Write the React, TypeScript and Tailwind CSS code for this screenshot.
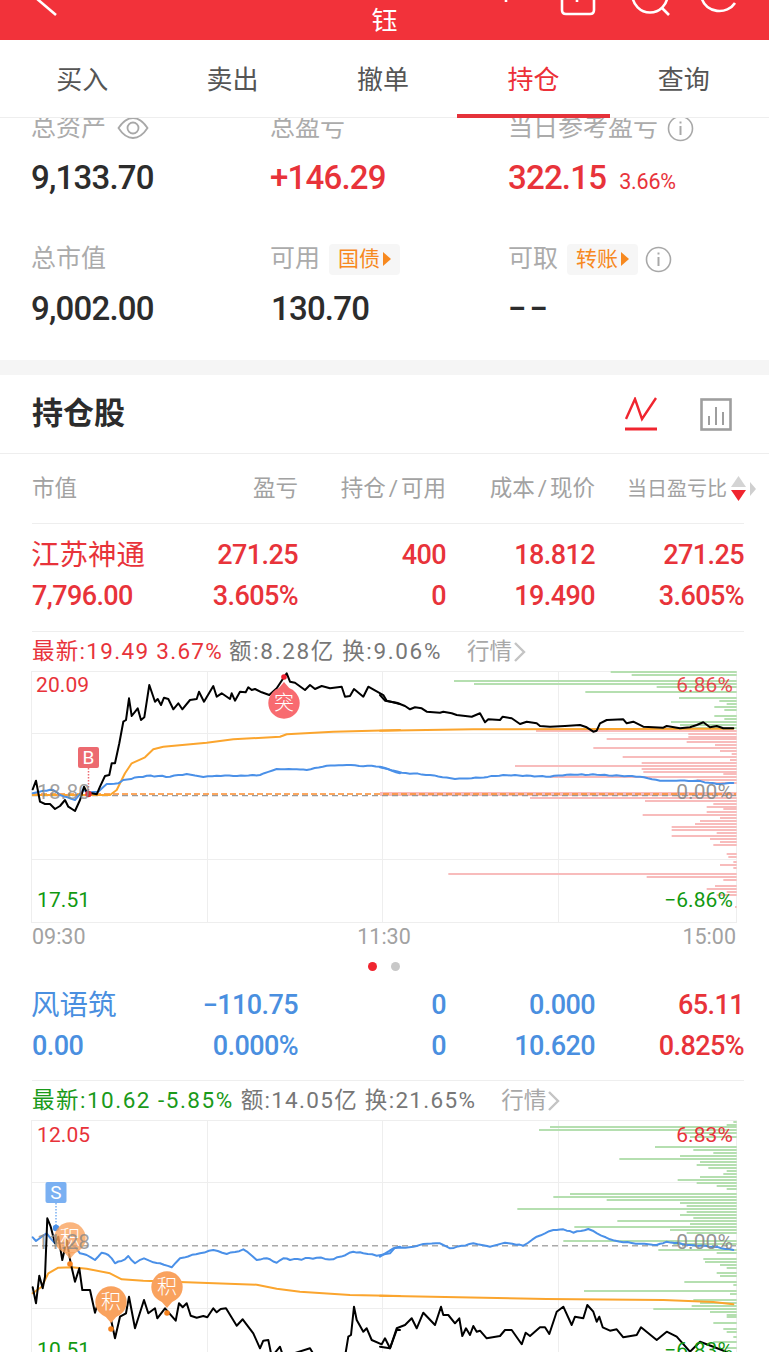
import React from "react";

const FONT = "font-['Roboto','Noto_Sans_CJK_SC',sans-serif]";
type P = [number, number];

const zz = (pts: P[], ox: number, oy: number) =>
  pts.map(([x, y]) => `${(ox + x / 3).toFixed(1)},${(oy + y / 3).toFixed(1)}`).join(" ");

const wobble = (pts: P[], amp: number): P[] => {
  const out: P[] = [];
  for (let i = 0; i < pts.length - 1; i++) {
    const [x0, y0] = pts[i];
    const [x1, y1] = pts[i + 1];
    const n = Math.max(1, Math.round((x1 - x0) / 12));
    for (let k = 0; k < n; k++) {
      const x = x0 + ((x1 - x0) * k) / n;
      const y = y0 + ((y1 - y0) * k) / n;
      const noise = k === 0 ? 0 : amp * (Math.sin(x * 0.37) + Math.sin(x * 0.91 + 1.3)) * 0.6;
      out.push([x, y + noise]);
    }
  }
  out.push(pts[pts.length - 1]);
  return out;
};

const c1Black1: P[] = [[98,478],[108,452],[120,515],[135,522],[150,522],[165,537],[180,528],[195,510],[205,530],[225,543],[240,510],[252,470],[262,490],[275,490],[290,493],[300,470],[315,438],[328,435],[335,400],[345,400],[358,340],[370,275],[378,270],[387,205],[395,258],[413,235],[423,270],[433,262],[448,165],[465,215],[473,207],[483,225],[492,203],[505,207],[520,238],[535,220],[547,238],[570,210],[590,207],[597,185],[612,215],[640,168],[650,200],[665,190],[690,207],[695,190],[705,212],[720,185],[737,187],[745,172],[755,180],[765,177],[785,187],[808,195],[830,175],[850,145],[860,130],[870,155],[885,158],[915,180],[930,165],[945,177],[965,168],[990,175],[1025,170],[1035,200],[1050,198],[1062,177],[1090,200],[1105,170],[1150,195],[1160,212],[1200,222]];
const c1Black2: P[] = [[0,195],[15,212],[50,218],[75,228],[90,238],[105,232],[125,235],[140,245],[180,248],[190,245],[215,250],[230,255],[275,260],[300,250],[315,277],[325,268],[360,270],[368,260],[395,265],[420,282],[440,275],[470,280],[480,288],[510,290],[555,288],[600,285],[620,292],[640,305],[650,302],[660,280],[680,270],[730,268],[740,280],[760,275],[790,290],[850,293],[860,288],[900,295],[930,292],[950,285],[970,277],[990,292],[1010,288],[1030,295],[1060,295]];
const c1Orange1: P[] = [[98,495],[330,495],[350,480],[375,430],[395,400],[435,382],[460,358],[490,350],[620,338],[700,328],[840,320],[860,313],[1000,305],[1200,300]];
const c1Orange2: P[] = [[0,302],[280,298],[1060,296]];
const c1Blue1: P[] = [[98,490],[130,482],[160,480],[180,495],[225,510],[250,480],[270,487],[295,485],[320,462],[355,460],[370,450],[440,437],[510,440],[560,432],[610,441],[650,437],[700,438],[780,435],[830,417],[890,418],[920,420],[980,407],[1040,405],[1140,410],[1200,430]];
const c1Blue2: P[] = [[0,412],[65,428],[150,435],[225,447],[300,443],[370,435],[510,440],[560,434],[650,434],[780,440],[840,452],[950,452],[1010,462],[1060,459]];
const c1Green: P[] = [[125,692],[134,755],[152,222],[161,282],[170,830],[187,616],[205,897],[214,1018],[222,1040],[231,1003],[240,1033],[258,1003],[267,1033],[275,873],[285,900],[293,940]];
const c1Red: P[] = [[302,468],[311,925],[320,925],[328,680],[337,920],[346,1005],[354,640],[363,1020],[372,1055],[380,728],[389,1050],[398,785],[407,405],[416,785],[425,790],[433,1030],[442,510],[451,950],[460,1000],[488,0],[495,0],[503,450],[512,795],[521,1000],[530,980],[538,1030],[547,980],[556,788],[565,1020],[574,960],[583,945],[592,875],[601,875],[610,1010],[618,875],[627,990],[636,1020],[645,1000],[672,1040],[680,1045],[695,1060],[705,1020],[714,1060],[732,205],[741,800],[750,1030],[768,1005],[777,980],[786,1040],[795,1010],[830,1065]];

const c2Black1: P[] = [[98,622],[108,670],[118,587],[128,625],[135,590],[142,415],[152,440],[165,490],[175,470],[187,540],[200,480],[212,550],[225,605],[238,565],[247,630],[270,630],[285,698],[295,665],[325,680],[345,775],[360,710],[378,700],[387,650],[405,745],[432,660],[445,700],[465,685],[472,715],[495,685],[527,722],[537,670],[548,682],[560,670],[572,707],[590,713],[610,708],[622,712],[640,685],[650,697],[662,687],[678,685],[710,737],[728,718],[760,760],[780,805],[790,782],[805,780],[815,830],[840,800],[850,830],[930,805],[945,830],[1035,830],[1045,770],[1053,765],[1062,680],[1070,720],[1090,755],[1100,745],[1115,780],[1145,793],[1155,775],[1170,805],[1190,750],[1200,750]];
const c2Black2: P[] = [[0,800],[30,805],[50,745],[75,735],[95,715],[110,745],[130,698],[165,735],[183,680],[190,705],[205,705],[225,730],[238,715],[247,768],[258,745],[270,765],[280,738],[290,755],[300,752],[320,775],[360,768],[375,750],[395,750],[425,793],[437,758],[450,768],[480,742],[495,742],[508,762],[530,695],[550,680],[575,735],[585,710],[610,715],[622,675],[640,695],[650,725],[658,710],[668,742],[690,752],[710,748],[730,772],[770,765],[783,742],[830,780],[860,755],[890,770],[930,815],[960,785],[1000,800],[1040,816]];
const c2Blue1: P[] = [[98,472],[108,483],[125,470],[140,460],[165,490],[205,487],[225,500],[240,520],[260,525],[285,540],[305,518],[325,525],[345,550],[375,538],[385,528],[405,550],[432,535],[460,547],[480,550],[515,562],[540,535],[600,520],[640,510],[680,522],[730,508],[770,540],[800,535],[830,548],[850,535],[870,540],[950,533],[1000,538],[1060,515],[1090,520],[1130,527],[1170,520],[1185,503],[1200,500]];
const c2Blue2: P[] = [[0,530],[40,505],[100,500],[130,492],[180,490],[210,505],[280,490],[330,500],[375,488],[430,497],[470,470],[520,450],[550,448],[580,458],[625,447],[690,478],[730,487],[830,495],[860,485],[930,495],[1000,500],[1060,510]];
const c2Orange1: P[] = [[98,640],[125,620],[145,580],[175,563],[215,562],[260,566],[330,580],[365,598],[430,602],[560,607],[770,614],[830,626],[900,635],[1050,645],[1200,648]];
const c2Orange2: P[] = [[0,647],[500,657],[850,660],[1000,666],[1060,673]];
const c2Green: P[] = [[125,1060],[134,1040],[142,510],[150,477],[160,910],[170,930],[202,825],[211,940],[220,1000],[229,900],[238,718],[247,960],[256,950],[265,985],[274,1040],[283,1030],[292,960],[301,893],[310,950],[319,1010],[328,1040],[342,570],[351,520],[360,680],[369,900],[378,920],[387,412],[396,920],[405,900],[414,940],[423,712],[432,930],[441,583],[450,870],[459,920],[483,550],[492,880],[510,835],[519,1010],[537,970],[546,975],[555,1020],[564,1040],[578,1010],[587,1020],[605,913],[614,1060],[632,612],[641,1050],[659,940],[668,960],[677,935],[686,820],[695,990],[704,1040],[712,1040],[730,1000],[748,1030],[757,1040],[770,1060],[785,1000],[803,1040]];

const Line = ({ pts, ox, oy, color, w = 2 }: { pts: P[]; ox: number; oy: number; color: string; w?: number }) => (
  <polyline points={zz(pts, ox, oy)} fill="none" stroke={color} strokeWidth={w} strokeLinejoin="round" strokeLinecap="round" />
);

const Bars = ({ pts, oy, color }: { pts: P[]; oy: number; color: string }) => (
  <g stroke={color} strokeWidth={2}>
    {pts.map(([y, x], i) => {
      const px = 380 + x / 3;
      const py = Math.round(oy + y / 3);
      return <line key={i} x1={px} x2={736.7} y1={py} y2={py} />;
    })}
  </g>
);

const Grid = ({ top }: { top: number }) => (
  <g stroke="#eeeeee" strokeWidth={1} fill="none">
    <rect x={31.5} y={top + 0.5} width={705} height={251} />
    <line x1={32} x2={736} y1={top + 62.5} y2={top + 62.5} />
    <line x1={32} x2={736} y1={top + 188.5} y2={top + 188.5} />
    <line x1={207.5} x2={207.5} y1={top} y2={top + 251} />
    <line x1={382.5} x2={382.5} y1={top} y2={top + 251} />
    <line x1={558.5} x2={558.5} y1={top} y2={top + 251} />
  </g>
);

const Bubble = ({ cx, cy, dotY, color, dot, label }: { cx: number; cy: number; dotY: number; color: string; dot: string; label: string }) => (
  <g>
    <circle cx={cx} cy={cy} r={15.7} fill={color} />
    <polygon points={dotY > cy ? `${cx - 6},${cy + 14} ${cx + 6},${cy + 14} ${cx},${cy + 21}` : `${cx - 6},${cy - 14} ${cx + 6},${cy - 14} ${cx},${cy - 21}`} fill={color} />
    <circle cx={cx} cy={dotY} r={2.8} fill={dot} />
    <text x={cx} y={cy + 7} textAnchor="middle" fontSize={20} fontWeight={300} fill="#fff" fontFamily="'Noto Sans CJK SC',sans-serif">{label}</text>
  </g>
);

const Flag = ({ x, y, color, dot, label, dotY }: { x: number; y: number; color: string; dot: string; label: string; dotY: number }) => (
  <g>
    <line x1={x + 10.5} x2={x + 10.5} y1={y + 21} y2={dotY} stroke={color} strokeWidth={1.5} strokeDasharray="1.5 1.5" />
    <rect x={x} y={y} width={21} height={21} rx={2} fill={color} />
    <circle cx={x + 10.5} cy={dotY} r={3.2} fill={dot} />
    <text x={x + 10.5} y={y + 17} textAnchor="middle" fontSize={19} fill="#fff" fontFamily="Roboto,sans-serif">{label}</text>
  </g>
);

const Tag = ({ label }: { label: string }) => (
  <span className="ml-[9px] flex h-[31px] w-[71px] items-center justify-center gap-[3px] rounded-[4px] bg-[#f6f6f6] text-[21px] text-[#f7891f]">
    {label}
    <svg width="8" height="14" viewBox="0 0 8 14"><polygon points="0,0 8,7 0,14" fill="#f7891f" /></svg>
  </span>
);

const Info = ({ className = "" }: { className?: string }) => (
  <svg width="27" height="27" viewBox="0 0 27 27" className={className} fill="none" stroke="#a8a8a8">
    <circle cx="13.5" cy="13.5" r="12" strokeWidth="1.6" />
    <line x1="13.5" y1="11" x2="13.5" y2="20" strokeWidth="2" />
    <line x1="13.5" y1="6.5" x2="13.5" y2="8.5" strokeWidth="2" />
  </svg>
);

const Eye = () => (
  <svg width="32" height="22" viewBox="0 0 32 22" fill="none" stroke="#a8a8a8" className="ml-[11px]">
    <path d="M1.5 11 C7 2.5 12 1 16 1 C20 1 25 2.5 30.5 11 C25 19.5 20 21 16 21 C12 21 7 19.5 1.5 11 Z" strokeWidth="1.8" />
    <circle cx="16" cy="11" r="5.5" strokeWidth="1.8" />
  </svg>
);

const Stat = ({ label, extra, value, valueClass, sub }: { label: string; extra?: React.ReactNode; value: string; valueClass: string; sub?: string }) => (
  <div>
    <div className="flex h-[32px] items-center text-[25px] leading-[32px] text-[#ababab]">
      {label}
      {extra}
    </div>
    <div className={`mt-[14px] flex h-[40px] items-baseline text-[33px] font-medium leading-[40px] tracking-[-0.8px] ${valueClass}`}>
      {value}
      {sub && <span className="ml-[13px] text-[21.5px] font-normal tracking-[-0.2px]">{sub}</span>}
    </div>
  </div>
);

const Row = ({ color, name, v1, v2, c1, c2, c3, c4, c5, c6, c7, c8, c9 }: { color: string; name: string; v1: string; v2: string; c1: string; c2: string; c3: string; c4: string; c5: string; c6: string; c7?: string; c8?: string; c9: string }) => (
  <div className={`grid grid-cols-[266px_148px_149px_149px] gap-y-[12px] text-[27px] font-medium leading-[29px] tracking-[-0.6px] ${color}`}>
    <span className="flex h-[29px] items-center justify-between">
      <span className="-ml-px text-[28.5px] font-normal tracking-normal">{name}</span>
      <span>{c1}</span>
    </span>
    <span className="text-right">{c2}</span>
    <span className="text-right">{c3}</span>
    <span className={`text-right ${c7 ?? ""}`}>{c4}</span>
    <span className="flex h-[29px] items-center justify-between">
      <span>{v1}</span>
      <span>{v2}</span>
    </span>
    <span className="text-right">{c5}</span>
    <span className="text-right">{c6}</span>
    <span className={`text-right ${c8 ?? ""}`}>{c9}</span>
  </div>
);

const Quote = ({ lead, rest, leadClass, restClass }: { lead: string; rest: string; leadClass: string; restClass: string }) => (
  <div className="flex h-[39px] items-center text-[22.5px] text-[#777777]">
    <span className={leadClass}>{lead}</span>
    <span className={restClass}>{rest}</span>
    <span className="ml-[25px] flex items-center text-[#a8a8a8]">
      行情
      <svg width="13" height="22" viewBox="0 0 13 22" fill="none" stroke="#c4c4c4" strokeWidth="2.4" className="ml-[1px]"><polyline points="2,2 11,11 2,20" /></svg>
    </span>
  </div>
);

const Overlay = ({ className, children }: { className: string; children: React.ReactNode }) => (
  <span className={`absolute text-[21px] leading-[24px] tracking-[0.1px] ${className}`}>{children}</span>
);

const Slash = ({ a, b }: { a: string; b: string }) => (
  <span className="text-right">{a}<span className="px-[3px]">/</span>{b}</span>
);

export default function App() {
  return (
    <div className={`relative h-[1352px] w-[769px] overflow-hidden bg-white ${FONT}`}>
      <header className="relative flex h-10 items-end justify-center bg-[#f2323a]">
        <span className="text-[26px] leading-[38px] text-white">钰</span>
        <svg width="769" height="40" viewBox="0 0 769 40" className="absolute left-0 top-0" fill="none" stroke="#ffffff" strokeWidth="2.6">
          <line x1="36" y1="-2" x2="56" y2="15" />
          <line x1="506" y1="0" x2="506" y2="2" />
          <path d="M562 -6 V10 Q562 14 566 14 H590 Q594 14 594 10 V-6" />
          <line x1="577" y1="0" x2="577" y2="2" />
          <circle cx="650" cy="-5" r="17.5" />
          <line x1="662" y1="8" x2="669" y2="15" />
          <path d="M702 -1 A18 16 0 0 0 735 3" />
        </svg>
      </header>

      <nav className="relative ml-[7px] grid h-[77px] w-[752px] grid-cols-5 items-center pt-[4px] text-[26px] text-[#555555]">
        <span className="text-center">买入</span>
        <span className="text-center">卖出</span>
        <span className="text-center">撤单</span>
        <span className="text-center text-[#ec3038]">持仓</span>
        <span className="text-center">查询</span>
        <span className="absolute bottom-[-1px] left-[450px] h-[4px] w-[153px] bg-[#e5323a]" />
      </nav>
      <div className="h-px bg-[#eeeeee]" />

      <section className="h-[242px] overflow-hidden">
        <div className="-mt-[6px] grid grid-cols-[239px_238px_1fr] gap-y-[45px] pl-[31px]">
          <Stat label="总资产" extra={<Eye />} value="9,133.70" valueClass="text-[#2c2c2c]" />
          <Stat label="总盈亏" value="+146.29" valueClass="text-[#e8333a]" />
          <Stat label="当日参考盈亏" extra={<Info className="ml-[9px]" />} value="322.15" sub="3.66%" valueClass="text-[#e8333a]" />
          <Stat label="总市值" value="9,002.00" valueClass="text-[#2c2c2c]" />
          <Stat label="可用" extra={<Tag label="国债" />} value="130.70" valueClass="text-[#2c2c2c] pl-[1px]" />
          <Stat label="可取" extra={<><Tag label="转账" /><Info className="ml-[7px]" /></>} value="−−" valueClass="text-[#2c2c2c] !tracking-[3px]" />
        </div>
      </section>

      <div className="h-[15px] bg-[#f5f5f5]" />

      <div className="flex h-[79px] items-center justify-between border-b border-[#eeeeee] pl-[32px] pr-[37px]">
        <h2 className="text-[31px] font-bold text-[#2c2c2c]">持仓股</h2>
        <div className="flex items-center gap-[43px]">
          <svg width="32" height="34" viewBox="0 0 32 34" fill="none" stroke="#f0252f" strokeWidth="2.4">
            <polyline points="1,22 10,2 17,22 31,1" />
            <line x1="0" x2="32" y1="32" y2="32" strokeWidth="3" />
          </svg>
          <svg width="32" height="33" viewBox="0 0 32 33" fill="none" stroke="#9e9e9e">
            <rect x="1.5" y="1.5" width="29" height="30" strokeWidth="2.6" />
            <line x1="9" x2="9" y1="18" y2="27" strokeWidth="2" />
            <line x1="16" x2="16" y1="9" y2="27" strokeWidth="2" />
            <line x1="23" x2="23" y1="14" y2="27" strokeWidth="2" />
          </svg>
        </div>
      </div>

      <main className="pl-[32px] pr-[25px]">
        <div className="grid h-[70px] grid-cols-[266px_148px_149px_149px] items-center border-b border-[#eeeeee] text-[22.5px] text-[#a2a2a2]">
          <span className="flex justify-between"><span>市值</span><span>盈亏</span></span>
          <Slash a="持仓" b="可用" />
          <Slash a="成本" b="现价" />
          <span className="relative text-right text-[20px]">
            <span className="absolute right-0 top-1/2 flex -translate-y-1/2 items-center whitespace-nowrap">
              当日盈亏比
              <span className="ml-[4px] flex flex-col gap-[3px]">
                <svg width="15" height="11" viewBox="0 0 15 11"><polygon points="7.5,0 15,11 0,11" fill="#d4d4d4" /></svg>
                <svg width="15" height="11" viewBox="0 0 15 11"><polygon points="7.5,11 15,0 0,0" fill="#f0252f" /></svg>
              </span>
              <svg width="6" height="14" viewBox="0 0 6 14" className="ml-[4px] -mr-[12px]"><polygon points="0,0 6,7 0,14" fill="#cfcfcf" /></svg>
            </span>
          </span>
        </div>

        <div className="pb-[20px] pt-[17px]">
          <Row color="text-[#e8333a]" name="江苏神通" c1="271.25" c2="400" c3="18.812" c4="271.25" v1="7,796.00" v2="3.605%" c5="0" c6="19.490" c9="3.605%" />
        </div>
        <div className="border-t border-[#eeeeee]">
          <Quote lead="最新:19.49 3.67%" rest="额:8.28亿 换:9.06%" leadClass="tracking-[1.3px] text-[#e8333a]" restClass="ml-[6px] tracking-[1.65px]" />
        </div>

        <div className="relative h-[252px]">
          <svg width="769" height="252" viewBox="0 671 769 252" className="absolute -left-[32px] top-0">
            <Grid top={671} />
            <Bars pts={c1Green} oy={630} color="#b5dfb0" />
            <Bars pts={c1Red} oy={630} color="#f8bcbc" />
            <line x1="32" x2="736" y1="795.7" y2="795.7" stroke="#999" strokeWidth="1.2" strokeDasharray="6 4" />
            <line x1="32" x2="736" y1="794" y2="794" stroke="#fb8c2e" strokeWidth="1.6" strokeDasharray="6 3" />
            <Line pts={c1Orange1} ox={0} oy={630} color="#fba52e" />
            <Line pts={c1Orange2} ox={380} oy={630} color="#fba52e" />
            <Line pts={wobble(c1Blue1, 1.5)} ox={0} oy={630} color="#4a90e8" />
            <Line pts={wobble(c1Blue2, 1)} ox={380} oy={630} color="#4a90e8" />
            <Line pts={c1Black1} ox={0} oy={630} color="#000" />
            <Line pts={c1Black2} ox={380} oy={630} color="#000" />
            <Flag x={78} y={747} color="#ec6a70" dot="#e02a32" label="B" dotY={794} />
            <Bubble cx={284} cy={703} dotY={677} color="#f86b70" dot="#ee2030" label="突" />
          </svg>
          <Overlay className="left-[4px] top-[2px] text-[#e8333a]">20.09</Overlay>
          <Overlay className="left-[5px] top-[109px] text-[#888888]/80">18.80</Overlay>
          <Overlay className="left-[5px] top-[217px] text-[#119911]">17.51</Overlay>
          <Overlay className="right-[11px] top-[2px] text-[#e8333a]/90">6.86%</Overlay>
          <Overlay className="right-[11px] top-[109px] text-[#888888]/90">0.00%</Overlay>
          <Overlay className="right-[11px] top-[217px] text-[#119911]">−6.86%</Overlay>
        </div>

        <div className="flex h-[28px] items-center justify-between pr-[8px] text-[21.5px] leading-[28px] text-[#a2a2a2]">
          <span>09:30</span><span>11:30</span><span>15:00</span>
        </div>
        <div className="flex h-[30px] items-center justify-center gap-[14px] pr-[8px]">
          <span className="h-[9px] w-[9px] rounded-full bg-[#f0252f]" />
          <span className="h-[9px] w-[9px] rounded-full bg-[#c8c8c8]" />
        </div>

        <div className="pb-[19px] pt-[10px]">
          <Row color="text-[#4a8fe0]" name="风语筑" c1="−110.75" c2="0" c3="0.000" c4="65.11" v1="0.00" v2="0.000%" c5="0" c6="10.620" c7="text-[#e8333a]" c8="text-[#e8333a]" c9="0.825%" />
        </div>
        <div className="border-t border-[#eeeeee]">
          <Quote lead="最新:10.62 -5.85%" rest="额:14.05亿 换:21.65%" leadClass="tracking-[1.5px] text-[#1a9a1a]" restClass="ml-[7px] tracking-[1.3px]" />
        </div>

        <div className="relative h-[252px]">
          <svg width="769" height="252" viewBox="0 1120 769 252" className="absolute -left-[32px] top-0">
            <Grid top={1120} />
            <Bars pts={c2Green} oy={1080} color="#b5dfb0" />
            <line x1="32" x2="736" y1="1245.7" y2="1245.7" stroke="#aaa" strokeWidth="1.4" strokeDasharray="6 4" />
            <Line pts={c2Orange1} ox={0} oy={1080} color="#fba52e" />
            <Line pts={c2Orange2} ox={380} oy={1080} color="#fba52e" />
            <Line pts={wobble(c2Blue1, 2)} ox={0} oy={1080} color="#4a90e8" />
            <Line pts={wobble(c2Blue2, 1.5)} ox={380} oy={1080} color="#4a90e8" />
            <Line pts={c2Black1} ox={0} oy={1080} color="#000" />
            <Line pts={c2Black2} ox={380} oy={1080} color="#000" />
            <Flag x={45.5} y={1182} color="#7ab0f2" dot="#4a90e8" label="S" dotY={1228} />
            <Bubble cx={70} cy={1238} dotY={1264} color="#f9a25ecc" dot="#f5821e" label="积" />
            <Bubble cx={111} cy={1302} dotY={1329} color="#f9a25e" dot="#f5821e" label="积" />
            <Bubble cx={167} cy={1287} dotY={1313} color="#f9a25e" dot="#f5821e" label="积" />
          </svg>
          <Overlay className="left-[5px] top-[3px] text-[#e8333a]">12.05</Overlay>
          <Overlay className="left-[5px] top-[110px] text-[#888888]/80">11.28</Overlay>
          <Overlay className="left-[5px] top-[218px] text-[#119911]">10.51</Overlay>
          <Overlay className="right-[11px] top-[3px] text-[#e8333a]">6.83%</Overlay>
          <Overlay className="right-[11px] top-[110px] text-[#888888]/90">0.00%</Overlay>
          <Overlay className="right-[11px] top-[218px] text-[#119911]">−6.83%</Overlay>
        </div>
      </main>
    </div>
  );
}
